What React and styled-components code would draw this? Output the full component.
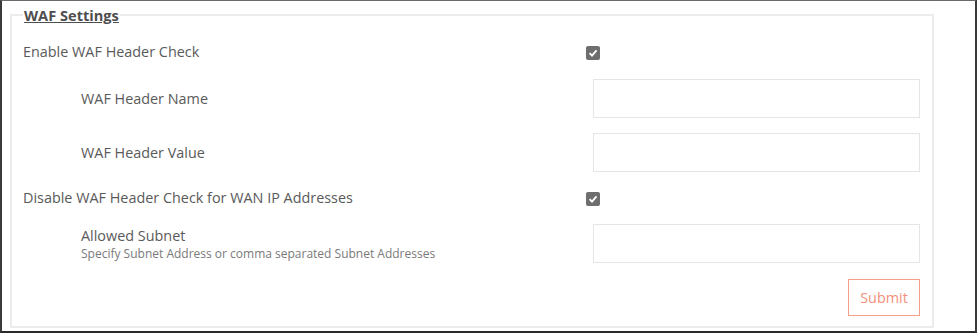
import React from 'react'
import styled, { createGlobalStyle } from 'styled-components'

const GlobalStyle = createGlobalStyle`
  html, body {
    margin: 0;
    padding: 0;
    background: #ffffff;
  }
  body {
    font-family: 'Open Sans', 'Noto Sans', 'Liberation Sans', sans-serif;
    color: #585858;
  }
`

const Frame = styled.div`
  box-sizing: border-box;
  width: 977px;
  height: 333px;
  border-top: 1px solid #6a6a6a;
  border-left: 2px solid #3a3a3a;
  border-right: 2px solid #3a3a3a;
  border-bottom: 2px solid #2a2a2a;
  padding: 5px 41px 0 8px;
`

const Fieldset = styled.fieldset`
  box-sizing: border-box;
  margin: 0;
  height: 322px;
  padding: 0 12px 0 11px;
  border: 2px solid #ececec;
  min-width: 0;
`

const Legend = styled.legend`
  padding: 0 1px;
  margin-left: 0;
  font-size: 14.6px;
  font-weight: 700;
  text-decoration: underline;
  color: #4e4e4e;
  line-height: 18px;
`

const Row = styled.div`
  display: grid;
  grid-template-columns: 563px 1fr;
  align-items: center;
  height: ${p => p.h}px;
  margin-top: ${p => p.mt || 0}px;
`

const Label = styled.div`
  padding-left: ${p => (p.indent ? 58 : 0)}px;
  font-size: 14.4px;
  line-height: 18px;
  color: #5a5a5a;
`

const Hint = styled.div`
  font-size: 12px;
  line-height: 15px;
  color: #7a7a7a;
  margin-top: 1px;
`

const Box = styled.span`
  display: inline-flex;
  align-items: center;
  justify-content: center;
  width: 14px;
  height: 14px;
  border-radius: 2px;
  background: #6e6e6e;
`

const TextInput = styled.input`
  box-sizing: border-box;
  margin-left: 7px;
  width: 327px;
  height: 39px;
  border: 1px solid #e5e5e5;
  background: #fff;
  outline: none;
`

const Actions = styled.div`
  display: flex;
  justify-content: flex-end;
  margin-top: 16px;
`

const SubmitButton = styled.button`
  box-sizing: border-box;
  width: 72px;
  height: 37px;
  border: 1.5px solid #f5a18a;
  background: #fff;
  color: #f3907a;
  font-family: 'Open Sans', 'Noto Sans', sans-serif;
  font-size: 14.4px;
  cursor: pointer;
`

const Check = () => (
  <Box>
    <svg width="10" height="10" viewBox="0 0 10 10">
      <path d="M1.6 5.2 L4 7.6 L8.5 2.4" fill="none" stroke="#fff" strokeWidth="1.9" />
    </svg>
  </Box>
)

const App = () => (
  <React.Fragment>
    <GlobalStyle />
    <Frame>
      <Fieldset>
        <Legend>WAF Settings</Legend>
        <Row h={28} mt={14}>
          <Label>Enable WAF Header Check</Label>
          <div>
            <Check />
          </div>
        </Row>
        <Row h={39} mt={13}>
          <Label indent>WAF Header Name</Label>
          <TextInput type="text" />
        </Row>
        <Row h={39} mt={15}>
          <Label indent>WAF Header Value</Label>
          <TextInput type="text" />
        </Row>
        <Row h={28} mt={12}>
          <Label>Disable WAF Header Check for WAN IP Addresses</Label>
          <div>
            <Check />
          </div>
        </Row>
        <Row h={39} mt={12}>
          <Label indent>
            Allowed Subnet
            <Hint>Specify Subnet Address or comma separated Subnet Addresses</Hint>
          </Label>
          <TextInput type="text" />
        </Row>
        <Actions>
          <SubmitButton type="button">Submit</SubmitButton>
        </Actions>
      </Fieldset>
    </Frame>
  </React.Fragment>
)

export default App
